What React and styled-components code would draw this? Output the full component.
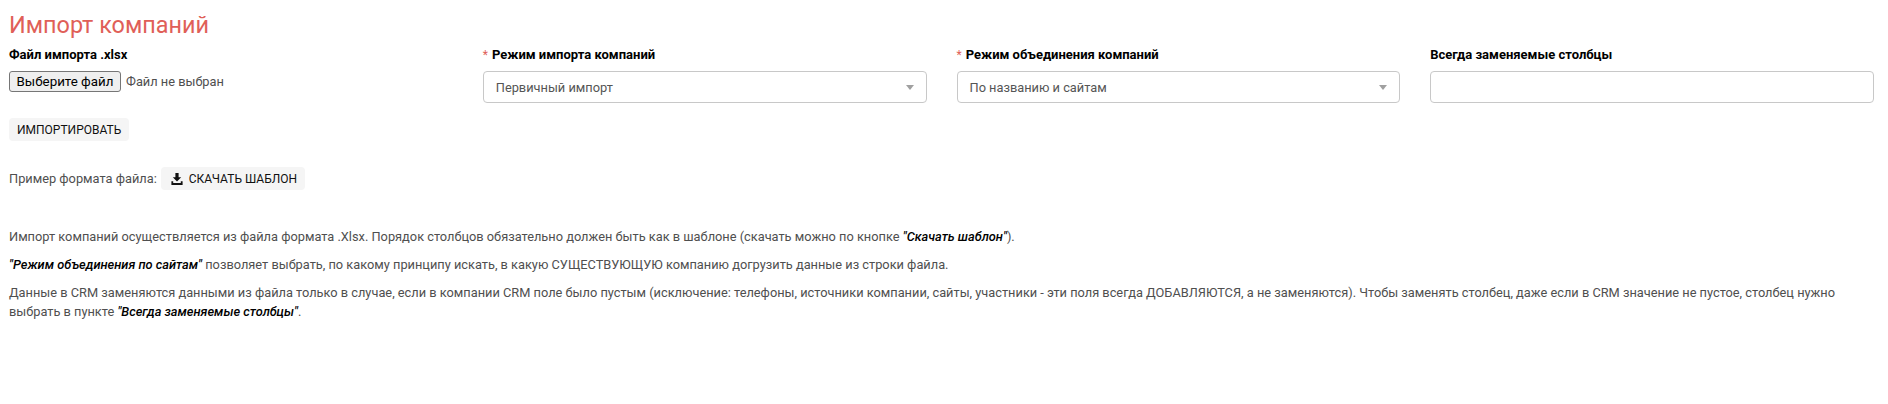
import React from "react";
import styled, { createGlobalStyle } from "styled-components";

const Global = createGlobalStyle`
  html, body {
    margin: 0;
    background: #fff;
    font-family: Roboto, "Liberation Sans", sans-serif;
  }
`;

const Page = styled.div`
  width: 1888px;
  height: 404px;
  box-sizing: border-box;
  padding: 11px 14px 0 9px;
  overflow: hidden;
`;

const Title = styled.h1`
  margin: 0 0 8px;
  font-size: 23.4px;
  line-height: 28px;
  font-weight: 400;
  color: #e05f58;
`;

const FormGrid = styled.div`
  display: grid;
  grid-template-columns: repeat(4, 1fr);
  column-gap: 30px;
`;

const Field = styled.div`
  display: flex;
  flex-direction: column;
`;

const Label = styled.label`
  height: 24px;
  font-size: 13px;
  line-height: 16px;
  font-weight: 700;
  color: #000;
`;

const Required = styled.span`
  color: #e05f58;
  font-size: 12px;
  font-weight: 400;
  margin-right: 4px;
`;

const FileRow = styled.div`
  display: flex;
  align-items: center;
  gap: 5px;
  font-size: 12.8px;
  color: #4f4f4f;
`;

const FileButton = styled.button`
  box-sizing: border-box;
  width: 112px;
  height: 21px;
  padding: 0;
  border: 1px solid #767676;
  border-radius: 3px;
  background: #efefef;
  font-family: inherit;
  font-size: 13.33px;
  color: #000;
`;

const SelectBox = styled.div`
  box-sizing: border-box;
  height: 32px;
  display: flex;
  align-items: center;
  justify-content: space-between;
  padding: 0 12px;
  border: 1px solid #c8c8c8;
  border-radius: 4px;
  background: #fff;
  font-size: 12.8px;
  color: #555;
`;

const Caret = styled.span`
  width: 0;
  height: 0;
  border-left: 4px solid transparent;
  border-right: 4px solid transparent;
  border-top: 5px solid #a0a0a0;
`;

const ActionButton = styled.button`
  display: inline-flex;
  align-items: center;
  gap: 6px;
  height: 23px;
  padding: ${(p) => (p.$withIcon ? "0 8px 0 10px" : "0 8px")};
  border: 0;
  border-radius: 4px;
  background: #f5f5f5;
  font-family: inherit;
  font-size: 12px;
  color: #111;
`;

const ImportRow = styled.div`
  margin-top: 15px;
  display: flex;
`;

const SampleRow = styled.div`
  display: flex;
  align-items: center;
  gap: 4px;
  margin-top: 26px;
  font-size: 12.8px;
  color: #4f4f4f;
`;

const Notes = styled.div`
  margin-top: 37px;
  font-size: 12.8px;
  line-height: 19px;
  color: #4f4f4f;
`;

const Note = styled.p`
  margin: 0 0 9px;
`;

const Strong = styled.i`
  font-weight: 500;
  color: #000;
`;

const DownloadIcon = () => (
  <svg width="12" height="12" viewBox="0 0 12 12" fill="#111">
    <path d="M4.4 0h3.2v4.2h2.6L6 8.6 1.8 4.2h2.6zM0.4 8.2h1.8v1.7h7.6V8.2h1.8V12H0.4z" />
  </svg>
);

export default function App() {
  return (
    <Page>
      <Global />
      <Title>Импорт компаний</Title>
      <FormGrid>
        <Field>
          <Label>Файл импорта .xlsx</Label>
          <FileRow>
            <FileButton>Выберите файл</FileButton>
            Файл не выбран
          </FileRow>
        </Field>
        <Field>
          <Label><Required>*</Required>Режим импорта компаний</Label>
          <SelectBox>Первичный импорт<Caret /></SelectBox>
        </Field>
        <Field>
          <Label><Required>*</Required>Режим объединения компаний</Label>
          <SelectBox>По названию и сайтам<Caret /></SelectBox>
        </Field>
        <Field>
          <Label>Всегда заменяемые столбцы</Label>
          <SelectBox />
        </Field>
      </FormGrid>
      <ImportRow>
        <ActionButton>ИМПОРТИРОВАТЬ</ActionButton>
      </ImportRow>
      <SampleRow>
        Пример формата файла:
        <ActionButton $withIcon><DownloadIcon />СКАЧАТЬ ШАБЛОН</ActionButton>
      </SampleRow>
      <Notes>
        <Note>Импорт компаний осуществляется из файла формата .Xlsx. Порядок столбцов обязательно должен быть как в шаблоне (скачать можно по кнопке <Strong>"Скачать шаблон"</Strong>).</Note>
        <Note><Strong>"Режим объединения по сайтам"</Strong> позволяет выбрать, по какому принципу искать, в какую СУЩЕСТВУЮЩУЮ компанию догрузить данные из строки файла.</Note>
        <Note>Данные в CRM заменяются данными из файла только в случае, если в компании CRM поле было пустым (исключение: телефоны, источники компании, сайты, участники - эти поля всегда ДОБАВЛЯЮТСЯ, а не заменяются). Чтобы заменять столбец, даже если в CRM значение не пустое, столбец нужно выбрать в пункте <Strong>"Всегда заменяемые столбцы"</Strong>.</Note>
      </Notes>
    </Page>
  );
}
